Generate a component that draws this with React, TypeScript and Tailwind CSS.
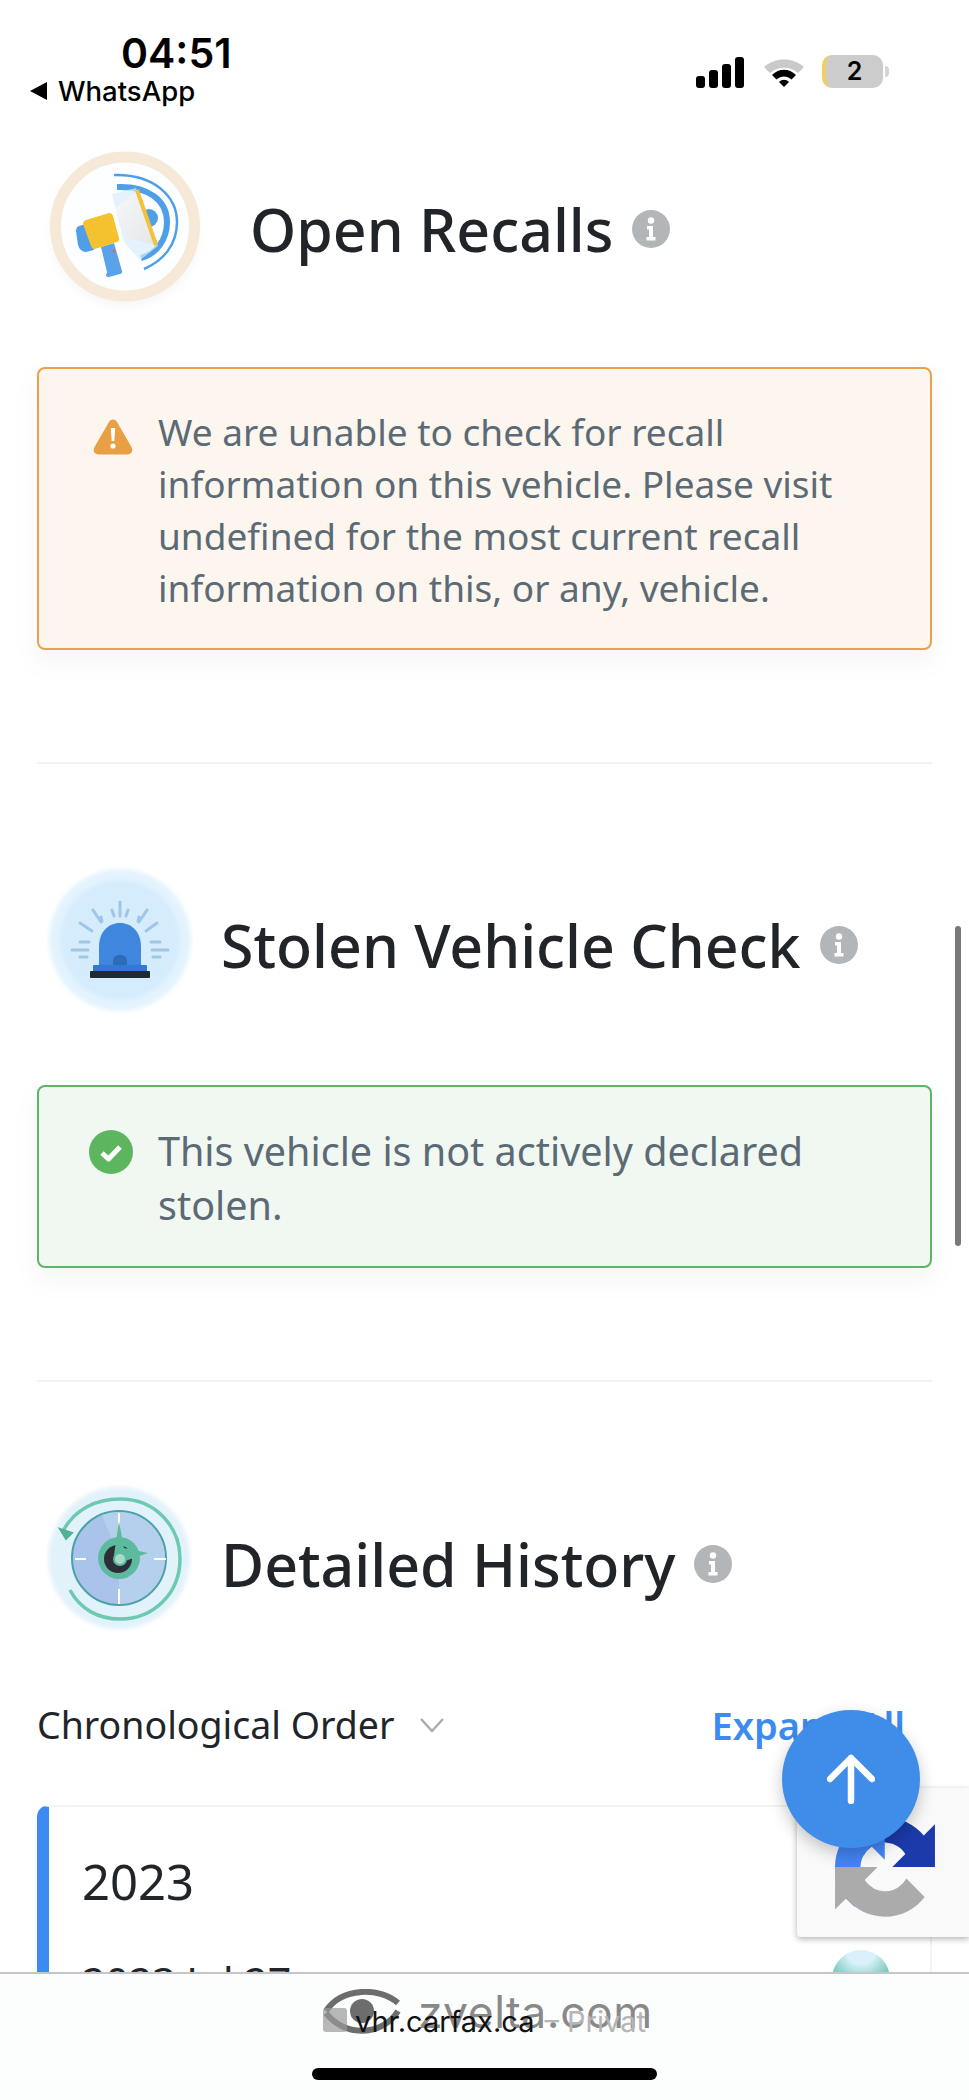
import React from "react";

const InfoDot = () => (
  <span className="flex h-[38px] w-[38px] shrink-0 items-center justify-center rounded-full bg-[#b3b6b9]">
    <svg width="10" height="24" viewBox="0 0 10 24" fill="#fff">
      <circle cx="5" cy="3.5" r="3.2" />
      <path d="M1 9h6v11h2.5v3.5H.5V20H3v-7.5H1z" />
    </svg>
  </span>
);

const MegaphoneIcon = () => (
  <svg width="200" height="190" viewBox="0 0 200 190" className="blur-[0.7px]">
    <defs>
      <filter id="sh" x="-30%" y="-30%" width="160%" height="160%">
        <feGaussianBlur stdDeviation="6" />
      </filter>
      <linearGradient id="horn" x1="0" y1="0" x2="1" y2="1">
        <stop offset="0" stopColor="#f6f8fa" />
        <stop offset="1" stopColor="#e4e6e8" />
      </linearGradient>
    </defs>
    <circle cx="105" cy="102" r="72" fill="#f0f2f3" filter="url(#sh)" />
    <circle cx="105" cy="96.500" r="69.500" fill="#fdfeff" stroke="#f6e9d8" strokeWidth="11" />
    <path d="M94 45 C136 44 157 68 157 92 C157 115 143 131 124 139" fill="none" stroke="#4f9ee8" strokeWidth="2.500" />
    <path d="M97 57 C128 56 147 70 147 92 C147 110 136 124 121 128" fill="none" stroke="#4f9ee8" strokeWidth="6" />
    <path d="M92 64 L116 58 L138 116 L120 130 L104 112 Z" fill="#d8ecfb" opacity="0.7" />
    <circle cx="129" cy="88" r="9" fill="#4f9ee8" />
    <path d="M118 60 L136 115 L107 108 L95 78 Z" fill="url(#horn)" />
    <path d="M117 60 L136 115" stroke="#f2c238" strokeWidth="4" />
    <path d="M59 96 L66 94 L74 120 L66 122 Q60 122 58 115 L56 101 Q56 97 59 96 Z" fill="#4f9ee8" />
    <path d="M81 117 L94 113 L102 141 Q103 143 100 144 L89 147 Q86 147 86 145 L87 142 Z" fill="#5ba3e8" />
    <circle cx="94" cy="121" r="1.500" fill="#e0645a" />
    <path d="M66 90 L89 83 Q92 83 93 86 L99 108 Q100 111 97 112 L75 119 Q72 119 71 116 L63 94 Q63 91 66 90 Z" fill="#f4c22f" />
  </svg>
);

const SirenIcon = () => (
  <svg width="180" height="170" viewBox="0 0 180 170" className="blur-[0.7px]">
    <defs>
      <filter id="soft" x="-20%" y="-20%" width="140%" height="140%">
        <feGaussianBlur stdDeviation="2" />
      </filter>
    </defs>
    <circle cx="90" cy="88" r="71" fill="#e3f3fe" filter="url(#soft)" />
    <circle cx="90" cy="88" r="60" fill="#d5ecfd" filter="url(#soft)" />
    <g stroke="#8db9dc" strokeOpacity="0.75" strokeWidth="3" strokeLinecap="round">
      <path d="M90 50V64M82 58L84 64M98 58L96 64M63 58L71 70M71 65L72 69M117 58L109 70M109 65L108 69M50 71L62 79M127 71L116 79M50 90H59M42 98H58M50 105H57M130 90H121M138 98H122M130 105H123" />
    </g>
    <path d="M69 114V95C69 80 78 71 90 71C102 71 111 80 111 95V114Z" fill="#3f87de" />
    <path d="M83 113V109C83 105 86 103 90 103C94 103 97 105 97 109V113Z" fill="#2f6cb8" />
    <rect x="63" y="113" width="54" height="7" rx="1" fill="#3378d3" />
    <rect x="60" y="119" width="60" height="7" rx="1" fill="#1f2a33" />
  </svg>
);

const ClockIcon = () => (
  <svg width="180" height="170" viewBox="0 0 180 170" className="blur-[0.7px]">
    <defs>
      <filter id="soft2" x="-20%" y="-20%" width="140%" height="140%">
        <feGaussianBlur stdDeviation="2" />
      </filter>
    </defs>
    <circle cx="89" cy="87" r="71" fill="#e2f2fa" filter="url(#soft2)" />
    <path d="M33 60 C45 38 66 28 90 28 C126 28 150 56 150 88 C150 122 124 148 90 148 C68 148 50 138 40 119" fill="none" stroke="#6ccab0" strokeWidth="3.500" />
    <path d="M30 58 L42 62 L36 68 Z" fill="#4fb295" stroke="#4fb295" strokeWidth="2" />
    <circle cx="89" cy="87" r="47" fill="#a9c3ea" stroke="#4aa2a8" strokeWidth="2" />
    <path d="M89 41 A46 46 0 0 1 89 133 L89 87 L72 44 Q80 41 89 41 Z" fill="#b5d0ec" />
    <path d="M89 42V56M89 118V133M45 88H56M124 88H136" stroke="#fff" strokeWidth="2" />
    <circle cx="89" cy="87" r="21" fill="#5cbb9f" />
    <circle cx="88" cy="88" r="14" fill="#2e2e38" />
    <path d="M89 50L94 77L118 82L95 90L84 84Z" fill="#5cbb9f" />
    <circle cx="90" cy="88" r="6" fill="#a5dcc9" stroke="#5cbb9f" strokeWidth="2" />
  </svg>
);

const WarnIcon = () => (
  <svg width="40" height="37" viewBox="0 0 40 37" className="shrink-0">
    <path d="M20 1.500C18 1.500 17 2.500 16 4L1.500 29C-.5 33 1.500 36.500 5.500 36.500H34.500C38.500 36.500 40.500 33 38.500 29L24 4C23 2.500 22 1.500 20 1.500Z" fill="#e99f44" />
    <path d="M17.800 10H22.200L21.400 23H18.600Z" fill="#fff" />
    <circle cx="20" cy="28" r="2.600" fill="#fff" />
  </svg>
);

const CheckIcon = () => (
  <svg width="44" height="44" viewBox="0 0 44 44" className="shrink-0">
    <circle cx="22" cy="22" r="22" fill="#5db55f" />
    <path d="M13 23L19.500 29L31 17" fill="none" stroke="#fff" strokeWidth="5" strokeLinejoin="round" />
  </svg>
);

const Divider = () => <div className="h-[2px] bg-[#f0f2f3]" />;

const Title = ({ children, pt }: { children: React.ReactNode; pt: string }) => (
  <div className={`flex items-center ${pt}`}>
    <h2 className="text-[59px] font-medium leading-none text-[#212529]">{children}</h2>
    <span className="ml-[19px]"><InfoDot /></span>
  </div>
);

export default function App() {
  return (
    <div className="relative h-[2100px] w-[969px] overflow-hidden bg-white font-['Noto_Sans',sans-serif]">
      {/* status bar */}
      <div className="flex h-[130px] items-start justify-between pl-[30px] pr-[80px] font-['Inter',sans-serif] text-black">
        <div className="flex flex-col pt-[29px]">
          <div className="pl-[91px] text-[41px] font-semibold leading-[48px]">04:51</div>
          <div className="-mt-[1px] flex items-center gap-[10px] text-[27.5px] font-medium leading-[30px]">
            <svg width="18" height="20" viewBox="0 0 18 20"><path d="M0 10L17 1V19Z" fill="#000" /></svg>
            WhatsApp
          </div>
        </div>
        <div className="flex items-center pt-[55px]">
          <svg width="48" height="32" viewBox="0 0 48 32" className="mr-[19px]">
            <rect x="0" y="20" width="9" height="12" rx="3" />
            <rect x="13" y="14" width="9" height="18" rx="3" />
            <rect x="26" y="8" width="9" height="24" rx="3" />
            <rect x="39" y="1" width="9" height="31" rx="3" />
          </svg>
          <svg width="42" height="32" viewBox="0 0 42 32" className="mr-[17px]">
            <path d="M1 11C12 1 30 1 41 11L35 17C27 10 15 10 7 17Z" fill="#c9c9c9" />
            <path d="M9 19C16 12 26 12 33 19L28.500 23.500C24 19.500 18 19.500 13.500 23.500Z" fill="#000" />
            <path d="M16 26C19 23 23 23 26 26L21 31Z" fill="#000" />
          </svg>
          <span className="flex h-[33px] w-[61px] items-center justify-center rounded-[10px] border-l-[4px] border-[#f0cf62] bg-[#cccccc] text-[25px] font-semibold leading-none">2</span>
          <span className="ml-[2px] h-[11px] w-[4px] rounded-r-full bg-[#d4d4d4]" />
        </div>
      </div>

      <div className="px-[37px]">
        {/* Open Recalls */}
        <div className="flex h-[190px] items-center">
          <div className="ml-[-17px] mr-[30px]"><MegaphoneIcon /></div>
          <Title pt="pt-[8px]">Open Recalls</Title>
        </div>
        <div className="mt-[47px] flex h-[283px] gap-[25px] rounded-[8px] border-2 border-[#e9a14c] bg-[#fdf6ef] pl-[54px] pr-[70px] pt-[37px] shadow-[0_12px_24px_rgba(120,130,140,0.08)]">
          <div className="pt-[12px]"><WarnIcon /></div>
          <p className="text-[37px] leading-[52px] text-[#5b6a75]">
            We are unable to check for recall information on this vehicle. Please visit undefined for the most current recall information on this, or any, vehicle.
          </p>
        </div>
        <div className="mt-[112px]"><Divider /></div>

        {/* Stolen */}
        <div className="mt-[88px] flex h-[170px] items-center">
          <div className="ml-[-7px] mr-[11px]"><SirenIcon /></div>
          <Title pt="pt-[16px]">Stolen Vehicle Check</Title>
        </div>
        <div className="mt-[63px] flex h-[183px] gap-[25px] rounded-[8px] border-2 border-[#60b565] bg-[#f1f8f2] pl-[50px] pr-[80px] pt-[37px] shadow-[0_12px_24px_rgba(120,130,140,0.08)]">
          <div className="pt-[6px]"><CheckIcon /></div>
          <p className="text-[39.5px] leading-[54px] text-[#5b6a75]">This vehicle is not actively declared stolen.</p>
        </div>
        <div className="mt-[112px]"><Divider /></div>

        {/* Detailed */}
        <div className="mt-[89px] flex h-[170px] items-center">
          <div className="ml-[-7px] mr-[11px]"><ClockIcon /></div>
          <Title pt="pt-[16px]">Detailed History</Title>
        </div>
        <div className="mt-[59px] flex items-center justify-between pr-[27px]">
          <div className="flex items-center">
            <span className="text-[37.5px] leading-[50px] text-[#212529]">Chronological Order</span>
            <svg width="26" height="16" viewBox="0 0 26 16" className="ml-[25px]"><path d="M2 2L13 14L24 2" fill="none" stroke="#a9adb1" strokeWidth="2.500" /></svg>
          </div>
          <span className="text-[38px] font-semibold leading-[50px] text-[#3b8bf0]">Expand All</span>
        </div>
        <div className="mt-[55px] h-[300px] rounded-l-[12px] border-l-[12px] border-t-2 border-r-2 border-[#f1f3f5] border-l-[#3d8bf2] pl-[33px]">
          <div className="pt-[46px] text-[49px] leading-[56px] text-[#212529]">2023</div>
          <div className="mt-[48px] flex items-start justify-between pr-[30px]">
            <span className="text-[41px] leading-[50px] text-[#212529]">2023 Jul 27</span>
            <span className="mr-[10px] -mt-[7px] block h-[58px] w-[58px] rounded-full bg-[radial-gradient(circle_at_50%_0%,#d8f1fb_22%,#5fbda4_62%)]" />
          </div>
        </div>
      </div>

      {/* scrollbar */}
      <div className="absolute left-[955px] top-[926px] h-[320px] w-[6px] rounded-full bg-[#77797b]" />

      {/* recaptcha */}
      <div className="absolute left-[797px] top-[1788px] h-[149px] w-[172px] rounded-l-[4px] bg-[#f9f9f9] shadow-[0_2px_6px_rgba(0,0,0,0.3)]">
        <svg width="100" height="100" viewBox="0 0 64 64" className="absolute left-[38px] top-[29px]">
          <path d="M64 31.955l-.033-1.37V4.687l-7.16 7.16C50.948 4.674 42.033.093 32.05.093c-10.4 0-19.622 4.96-25.458 12.64l11.736 11.86a15.55 15.55 0 0 1 4.754-5.334c2.05-1.6 4.952-2.906 8.968-2.906.485 0 .86.057 1.135.163 4.976.393 9.288 3.14 11.828 7.124l-8.307 8.307 32.29.008" fill="#1c3aa9" />
          <path d="M31.862 0l-1.37.033H4.594l7.16 7.16C4.58 13.05 0 21.965 0 31.948c0 10.4 4.96 19.622 12.64 25.458l11.86-11.736a15.55 15.55 0 0 1-5.334-4.754c-1.6-2.05-2.906-4.952-2.906-8.968 0-.485.057-.86.163-1.135.393-4.976 3.14-9.288 7.124-11.828l8.307 8.307L31.862 0" fill="#4285f4" />
          <path d="M.001 31.955l.033 1.37v25.898l7.16-7.16c5.86 7.173 14.775 11.754 24.76 11.754 10.4 0 19.622-4.96 25.458-12.64l-11.736-11.86a15.55 15.55 0 0 1-4.754 5.334c-2.05 1.6-4.952 2.906-8.968 2.906-.485 0-.86-.057-1.135-.163-4.976-.393-9.288-3.14-11.828-7.124l8.307-8.307-32.29-.008" fill="#ababab" />
        </svg>
      </div>

      {/* back-to-top */}
      <div className="absolute left-[782px] top-[1710px] flex h-[138px] w-[138px] items-center justify-center rounded-full bg-[#3f8de8] shadow-[0_6px_16px_rgba(0,0,0,0.22)]">
        <svg width="48" height="50" viewBox="0 0 48 50" fill="none" stroke="#fff" strokeWidth="6.500" strokeLinecap="round" strokeLinejoin="round">
          <path d="M24 47V4M3 25L24 4L45 25" />
        </svg>
      </div>

      {/* browser bar */}
      <div className="absolute bottom-0 left-0 h-[128px] w-full border-t-2 border-[#c6c6c8] bg-[#fcfdfd] font-['Inter',sans-serif]">
        <div className="absolute left-[322px] top-[13px] flex items-center gap-[16px] text-[#555555b3]">
          <svg width="80" height="46" viewBox="0 0 80 46" fill="none" stroke="#555" strokeWidth="6" opacity="0.85">
            <path d="M4 22C20 -2 58 -2 76 14M76 22C60 48 22 48 4 24" />
            <circle cx="40" cy="22" r="12" fill="#555" stroke="none" />
          </svg>
          <span className="text-[44.5px] font-normal leading-[50px] tracking-[0.5px]">zvelta.com</span>
        </div>
        <div className="relative flex pl-[323px] pt-[28px]">
          <span className="mt-[6px] mr-[8px] h-[24px] w-[24px] rounded-[3px] bg-[#9a9a9a] opacity-70" />
          <span className="text-[29px] leading-[40px] text-[#111]">vhr.carfax.ca</span>
          <span className="ml-[10px] text-[29px] leading-[40px] text-[#b5b5b5]">– Privat</span>
        </div>
        <div className="absolute left-[312px] top-[94px] h-[12px] w-[345px] rounded-full bg-black" />
      </div>
    </div>
  );
}
